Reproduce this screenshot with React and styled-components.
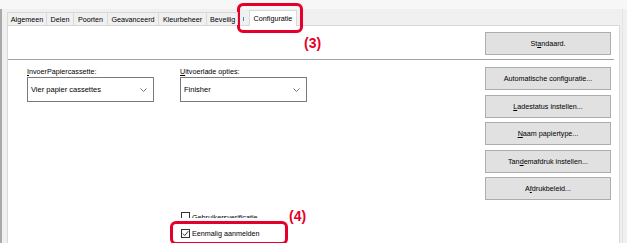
import React from 'react';
import styled, { createGlobalStyle } from 'styled-components';

const Global = createGlobalStyle`
  html, body {
    margin: 0;
    background: #fff;
  }
  body {
    font-family: "Liberation Sans", Arial, sans-serif;
  }
`

const Window = styled.div`
  position: relative;
  width: 627px;
  height: 243px;
  background: #f0f0f0;
  display: flex;
  flex-direction: column;
  color: #000;
  font-size: 7.2px;
`

const TopBand = styled.div`
  height: 9px;
  background: #f7f7f7;
`

const Main = styled.div`
  flex: 1;
  display: flex;
  min-height: 0;
  border-left: 2px solid #a9a9a9;
  padding-left: 5px;
`

const Sheet = styled.div`
  width: 613px;
  display: flex;
  flex-direction: column;
`

const RightStrip = styled.div`
  flex: 1;
  display: flex;
  padding-left: 2px;
  &::before {
    content: '';
    width: 1px;
    background: #e4e4e4;
  }
`

const TabStrip = styled.div`
  height: 16px;
  display: flex;
  align-items: flex-end;
  position: relative;
  z-index: 1;
`

const Tab = styled.div`
  box-sizing: border-box;
  height: 13px;
  width: ${p => p.w}px;
  border: 1px solid #d9d9d9;
  border-bottom: none;
  border-left-width: ${p => (p.first ? 1 : 0)}px;
  background: #f0f0f0;
  display: flex;
  align-items: center;
  justify-content: ${p => (p.last ? 'flex-start' : 'center')};
  padding-left: ${p => (p.last ? 3 : 0)}px;
  white-space: nowrap;
`

const TabGap = styled.div`
  width: 11px;
  height: 13px;
  display: flex;
  align-items: center;
  padding-left: 5px;
  box-sizing: border-box;
  &::before {
    content: '';
    width: 1px;
    height: 4px;
    background: #4a86d0;
  }
`

const ActiveTab = styled.div`
  box-sizing: border-box;
  width: 48px;
  height: 16px;
  margin-bottom: -1px;
  background: #fff;
  border: 1px solid #d9d9d9;
  border-bottom: none;
  display: flex;
  align-items: center;
  justify-content: center;
  padding-bottom: 1px;
`

const Panel = styled.div`
  flex: 1;
  background: #fff;
  border: 1px solid #d9d9d9;
  border-bottom: none;
  display: flex;
  flex-direction: column;
`

const HeaderRow = styled.div`
  display: flex;
  justify-content: flex-end;
  padding: 6px 8px 0 0;
`

const Separator = styled.div`
  height: 1px;
  margin: 4px 5px 0 0;
  background: #a3a3a3;
`

const Body = styled.div`
  display: flex;
  padding-top: 6px;
`

const Left = styled.div`
  flex: 1;
  padding-left: 19px;
`

const Fields = styled.div`
  display: flex;
  gap: 26px;
`

const Field = styled.div`
  width: 127px;
  display: flex;
  flex-direction: column;
`

const Label = styled.div`
  height: 11px;
  line-height: 11px;
  white-space: nowrap;
`

const Combo = styled.div`
  box-sizing: border-box;
  height: 25px;
  border: 1px solid #7a7a7a;
  background: #fff;
  display: flex;
  align-items: center;
  justify-content: space-between;
  padding: 0 6px 0 3px;
  font-size: 7.5px;
`

const Checks = styled.div`
  margin: 110px 0 0 154px;
  display: flex;
  flex-direction: column;
`

const CheckRow = styled.div`
  display: flex;
  align-items: ${p => (p.clipped ? 'flex-start' : 'center')};
  gap: 2px;
  height: ${p => (p.clipped ? 6 : 9)}px;
  margin-top: ${p => (p.clipped ? 0 : 11)}px;
  overflow: hidden;
  white-space: nowrap;
  line-height: ${p => (p.clipped ? 12 : 9)}px;
`

const Box = styled.div`
  box-sizing: border-box;
  flex: none;
  width: 9px;
  height: 9px;
  border: 1px solid #333;
  background: #fff;
  display: flex;
  align-items: center;
  justify-content: center;
`

const Buttons = styled.div`
  width: 126px;
  margin: 1px 8px 0 0;
  display: flex;
  flex-direction: column;
  gap: 4.5px;
`

const Button = styled.div`
  box-sizing: border-box;
  width: 126px;
  height: 23px;
  background: #e1e1e1;
  border: 1px solid #adadad;
  display: flex;
  align-items: center;
  justify-content: center;
  white-space: nowrap;
`

const RedBox = styled.div`
  position: absolute;
  box-sizing: border-box;
  left: ${p => p.x}px;
  top: ${p => p.y}px;
  width: ${p => p.w}px;
  height: ${p => p.h}px;
  border: 3px solid #e4002b;
  border-radius: 6px;
`

const Callout = styled.div`
  position: absolute;
  left: ${p => p.x}px;
  top: ${p => p.y}px;
  font-size: 14px;
  font-weight: bold;
  color: #e4002b;
  line-height: 14px;
`

const Chevron = () => (
  <svg width="7" height="4" viewBox="0 0 7 4">
    <polyline points="0.5,0.5 3.5,3.5 6.5,0.5" fill="none" stroke="#555" strokeWidth="0.8" />
  </svg>
)

const Check = () => (
  <svg width="7" height="7" viewBox="0 0 7 7">
    <polyline points="0.8,3.6 2.7,5.5 6.3,1.2" fill="none" stroke="#222" strokeWidth="0.9" />
  </svg>
)

const tabs = [
  ['Algemeen', 40],
  ['Delen', 27],
  ['Poorten', 34],
  ['Geavanceerd', 51],
  ['Kleurbeheer', 48],
  ['Beveilig', 31],
]

export default function App() {
  return (
    <>
      <Global />
      <Window>
        <TopBand />
        <Main>
          <Sheet>
            <TabStrip>
              {tabs.map(([name, w], i) => (
                <Tab key={name} w={w} first={i === 0} last={i === tabs.length - 1}>{name}</Tab>
              ))}
              <TabGap />
              <ActiveTab>Configuratie</ActiveTab>
            </TabStrip>
            <Panel>
              <HeaderRow>
                <Button>St<u>a</u>ndaard.</Button>
              </HeaderRow>
              <Separator />
              <Body>
                <Left>
                  <Fields>
                    <Field>
                      <Label><u>I</u>nvoerPapiercassette:</Label>
                      <Combo>Vier papier cassettes<Chevron /></Combo>
                    </Field>
                    <Field>
                      <Label><u>U</u>itvoerlade opties:</Label>
                      <Combo>Finisher<Chevron /></Combo>
                    </Field>
                  </Fields>
                  <Checks>
                    <CheckRow clipped>
                      <Box />
                      Gebruikersverificatie
                    </CheckRow>
                    <CheckRow>
                      <Box><Check /></Box>
                      Eenmalig aanmelden
                    </CheckRow>
                  </Checks>
                </Left>
                <Buttons>
                  <Button>Automatische configuratie...</Button>
                  <Button><u>L</u>adestatus instellen...</Button>
                  <Button><u>N</u>aam papiertype...</Button>
                  <Button>Tan<u>d</u>emafdruk instellen...</Button>
                  <Button>A<u>f</u>drukbeleid...</Button>
                </Buttons>
              </Body>
            </Panel>
          </Sheet>
          <RightStrip />
        </Main>
        <RedBox x={237} y={3} w={66} h={30} />
        <Callout x={304} y={36}>(3)</Callout>
        <RedBox x={170} y={221} w={118} h={24} />
        <Callout x={289} y={209}>(4)</Callout>
      </Window>
    </>
  )
}
